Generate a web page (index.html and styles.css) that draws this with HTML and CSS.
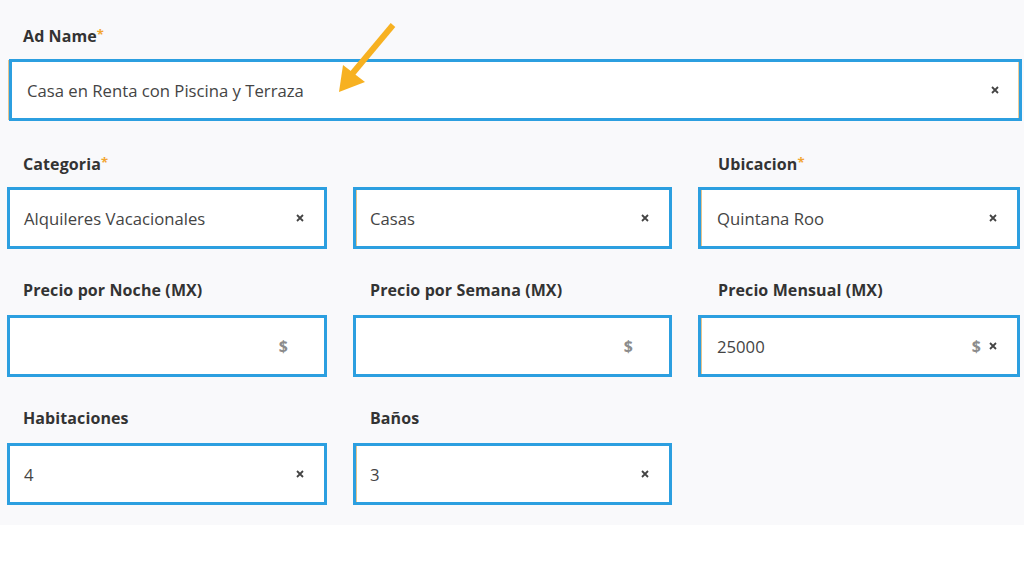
FILE: index.html
```html
<!DOCTYPE html>
<html lang="es">
<head>
<meta charset="utf-8">
<title>Formulario de anuncio</title>
<link rel="stylesheet" href="styles.css">
</head>
<body>
<div class="page">
  <form class="form">
    <div class="field span3">
      <div class="label">Ad Name<span class="req">*</span></div>
      <div class="input adname">
        <span class="value">Casa en Renta con Piscina y Terraza</span>
        <span class="addons"><svg class="x" viewBox="0 0 8 8"><path d="M1 1L7 7M7 1L1 7"/></svg></span>
      </div>
    </div>

    <div class="field">
      <div class="label">Categoria<span class="req">*</span></div>
      <div class="input">
        <span class="value">Alquileres Vacacionales</span>
        <span class="addons"><svg class="x" viewBox="0 0 8 8"><path d="M1 1L7 7M7 1L1 7"/></svg></span>
      </div>
    </div>
    <div class="field col2">
      <div class="label">&nbsp;</div>
      <div class="input tan">
        <span class="value">Casas</span>
        <span class="addons"><svg class="x" viewBox="0 0 8 8"><path d="M1 1L7 7M7 1L1 7"/></svg></span>
      </div>
    </div>
    <div class="field col3">
      <div class="label">Ubicacion<span class="req">*</span></div>
      <div class="input tan">
        <span class="value">Quintana Roo</span>
        <span class="addons"><svg class="x" viewBox="0 0 8 8"><path d="M1 1L7 7M7 1L1 7"/></svg></span>
      </div>
    </div>

    <div class="field">
      <div class="label">Precio por Noche (MX)</div>
      <div class="input">
        <span class="value"></span>
        <span class="addons"><span class="cur">$</span><svg class="x hidden" viewBox="0 0 8 8"><path d="M1 1L7 7M7 1L1 7"/></svg></span>
      </div>
    </div>
    <div class="field col2">
      <div class="label">Precio por Semana (MX)</div>
      <div class="input">
        <span class="value"></span>
        <span class="addons"><span class="cur">$</span><svg class="x hidden" viewBox="0 0 8 8"><path d="M1 1L7 7M7 1L1 7"/></svg></span>
      </div>
    </div>
    <div class="field col3">
      <div class="label">Precio Mensual (MX)</div>
      <div class="input tan">
        <span class="value">25000</span>
        <span class="addons"><span class="cur">$</span><svg class="x" viewBox="0 0 8 8"><path d="M1 1L7 7M7 1L1 7"/></svg></span>
      </div>
    </div>

    <div class="field">
      <div class="label">Habitaciones</div>
      <div class="input">
        <span class="value">4</span>
        <span class="addons"><svg class="x" viewBox="0 0 8 8"><path d="M1 1L7 7M7 1L1 7"/></svg></span>
      </div>
    </div>
    <div class="field col2">
      <div class="label">Baños</div>
      <div class="input tan">
        <span class="value">3</span>
        <span class="addons"><svg class="x" viewBox="0 0 8 8"><path d="M1 1L7 7M7 1L1 7"/></svg></span>
      </div>
    </div>
  </form>

  <svg class="arrow" viewBox="0 0 80 80" width="80" height="80">
    <line x1="73" y1="15" x2="32" y2="64" />
    <polygon points="19,82 23,55 45,72" />
  </svg>
</div>
</body>
</html>
```

FILE: styles.css
```css
html, body {
  margin: 0;
  padding: 0;
  background: #ffffff;
}

.page {
  position: relative;
  width: 1024px;
  height: 585px;
  font-family: "Open Sans", "Noto Sans", "Liberation Sans", sans-serif;
  color: #444444;
}

.form {
  display: grid;
  grid-template-columns: 320px 319px 322px;
  column-gap: 26px;
  row-gap: 33px;
  background: #f9f9fb;
  padding: 26px 0 20px 7px;
  margin: 0;
}

.field {
  display: flex;
  flex-direction: column;
}

.span3 {
  grid-column: 1 / 4;
}

.label {
  height: 16px;
  line-height: 16px;
  margin-bottom: 17px;
  padding-left: 16px;
  font-size: 16px;
  font-weight: 700;
  letter-spacing: 0.1px;
  color: #333333;
  white-space: nowrap;
}

.col2 .label {
  padding-left: 17px;
}

.col3 .label {
  padding-left: 20px;
}

.req {
  color: #f2a531;
  font-size: 13px;
  vertical-align: 3px;
}

.input {
  display: flex;
  align-items: center;
  height: 62px;
  box-sizing: border-box;
  border: 3px solid #2c9fe0;
  background: #ffffff;
  padding: 0 20px 0 14px;
}

.input.adname {
  margin-left: 2px;
  margin-right: -2px;
  padding-left: 15px;
  box-shadow: -2px 0 0 -1px #e5c48c, inset -1px 0 0 0 #ebcd98;
}

.input.tan {
  box-shadow: inset 1px 0 0 0 #e5c48c;
}

.col3 .input {
  padding-left: 16px;
}

.value {
  flex: 1;
  font-size: 16.7px;
  color: #444444;
  white-space: nowrap;
}

.addons {
  display: flex;
  align-items: center;
  gap: 8px;
}

.cur {
  font-size: 16px;
  font-weight: 700;
  color: #8c8c8c;
}

.x {
  width: 8px;
  height: 8px;
  stroke: #444444;
  stroke-width: 1.8;
  fill: none;
}

.x.hidden {
  visibility: hidden;
}

.arrow {
  position: absolute;
  left: 320px;
  top: 10px;
  overflow: visible;
}

.arrow line {
  stroke: #f7b121;
  stroke-width: 6;
  stroke-linecap: butt;
}

.arrow polygon {
  fill: #f7b121;
}
```
